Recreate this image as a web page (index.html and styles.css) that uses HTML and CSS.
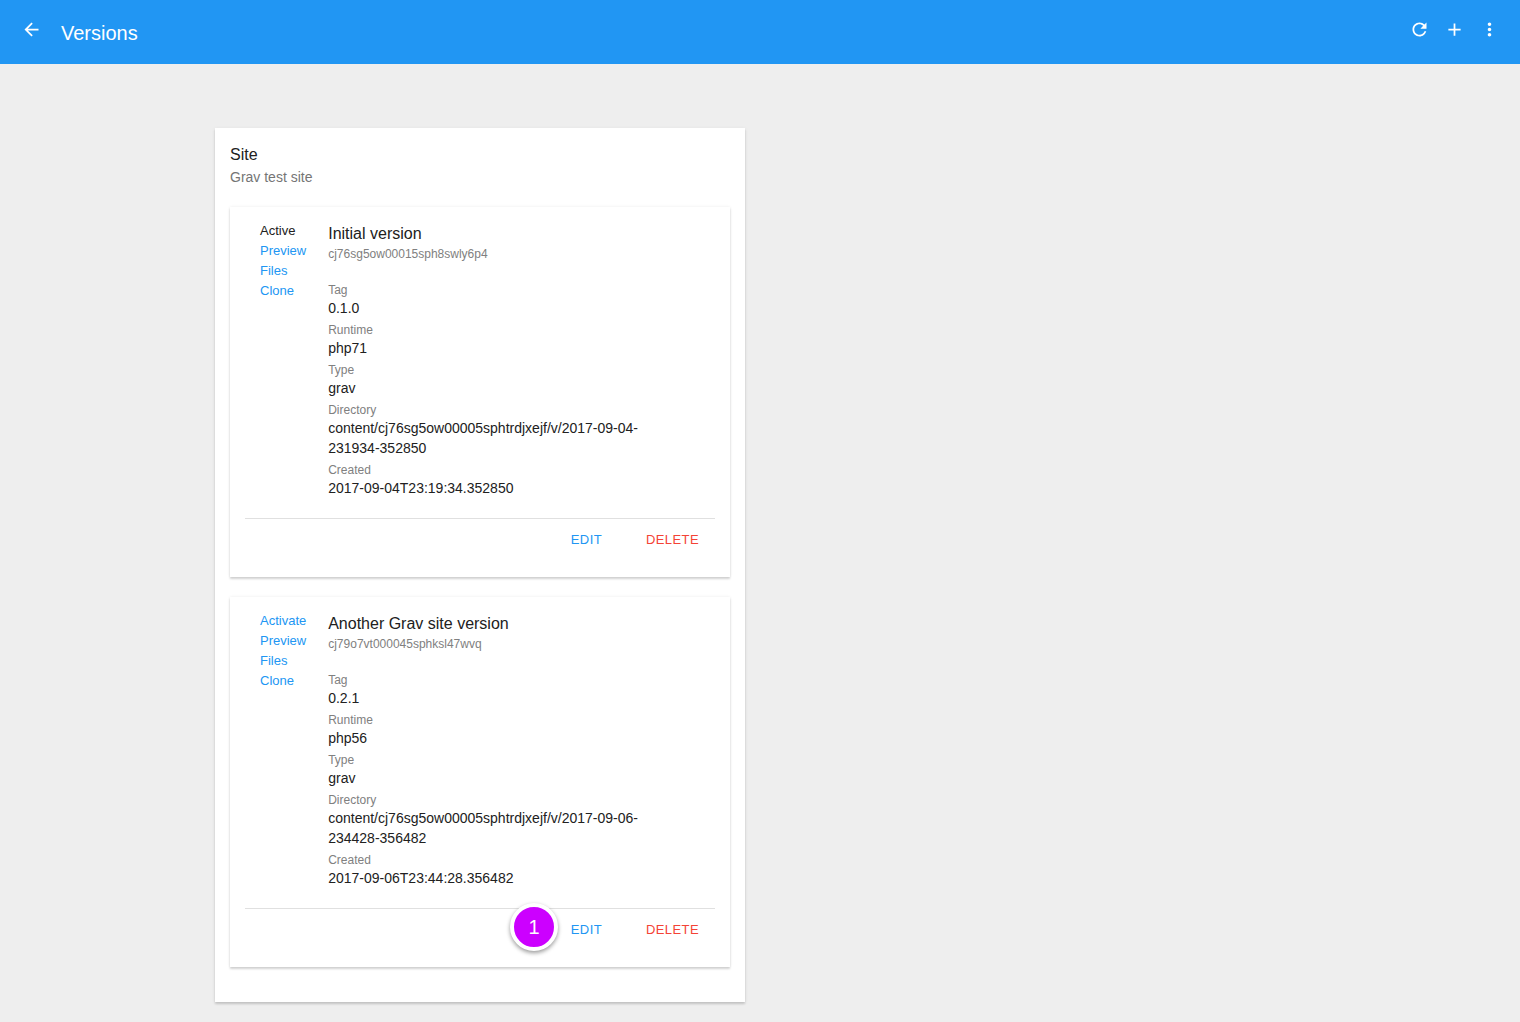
FILE: index.html
```html
<!DOCTYPE html>
<html lang="en">
<head>
    <meta charset="UTF-8">
    <title>Versions</title>
    <link rel="stylesheet" href="styles.css">
</head>
<body>
    <header class="toolbar">
        <svg class="icon back-icon" viewBox="0 0 24 24"><path d="M20 11H7.83l5.59-5.59L12 4l-8 8 8 8 1.41-1.41L7.83 13H20v-2z"/></svg>
        <div class="toolbar-title">Versions</div>
        <div class="toolbar-actions">
            <svg class="icon" viewBox="0 0 24 24"><path d="M17.65 6.35C16.2 4.9 14.21 4 12 4c-4.42 0-7.99 3.58-7.99 8s3.57 8 7.99 8c3.73 0 6.84-2.55 7.73-6h-2.08c-.82 2.33-3.04 4-5.65 4-3.31 0-6-2.69-6-6s2.69-6 6-6c1.66 0 3.14.69 4.22 1.78L13 11h7V4l-2.35 2.35z"/></svg>
            <svg class="icon" viewBox="0 0 24 24"><path d="M19 13h-6v6h-2v-6H5v-2h6V5h2v6h6v2z"/></svg>
            <svg class="icon" viewBox="0 0 24 24"><path d="M12 8c1.1 0 2-.9 2-2s-.9-2-2-2-2 .9-2 2 .9 2 2 2zm0 2c-1.1 0-2 .9-2 2s.9 2 2 2 2-.9 2-2-.9-2-2-2zm0 6c-1.1 0-2 .9-2 2s.9 2 2 2 2-.9 2-2-.9-2-2-2z"/></svg>
        </div>
    </header>

    <main class="content">
        <section class="site-card">
            <h2 class="site-name">Site</h2>
            <p class="site-desc">Grav test site</p>

            <article class="version-card">
                <div class="version-body">
                    <nav class="version-links">
                        <span class="active">Active</span>
                        <a href="#">Preview</a>
                        <a href="#">Files</a>
                        <a href="#">Clone</a>
                    </nav>
                    <div class="version-info">
                        <h3 class="version-name">Initial version</h3>
                        <p class="version-id">cj76sg5ow00015sph8swly6p4</p>
                        <dl class="fields">
                            <dt>Tag</dt>
                            <dd>0.1.0</dd>
                            <dt>Runtime</dt>
                            <dd>php71</dd>
                            <dt>Type</dt>
                            <dd>grav</dd>
                            <dt>Directory</dt>
                            <dd>content/cj76sg5ow00005sphtrdjxejf/v/2017-09-04-231934-352850</dd>
                            <dt>Created</dt>
                            <dd>2017-09-04T23:19:34.352850</dd>
                        </dl>
                    </div>
                </div>
                <div class="version-actions">
                    <button class="btn btn-edit">Edit</button>
                    <button class="btn btn-delete">Delete</button>
                </div>
            </article>

            <article class="version-card">
                <div class="version-body">
                    <nav class="version-links">
                        <a href="#">Activate</a>
                        <a href="#">Preview</a>
                        <a href="#">Files</a>
                        <a href="#">Clone</a>
                    </nav>
                    <div class="version-info">
                        <h3 class="version-name">Another Grav site version</h3>
                        <p class="version-id">cj79o7vt000045sphksl47wvq</p>
                        <dl class="fields">
                            <dt>Tag</dt>
                            <dd>0.2.1</dd>
                            <dt>Runtime</dt>
                            <dd>php56</dd>
                            <dt>Type</dt>
                            <dd>grav</dd>
                            <dt>Directory</dt>
                            <dd>content/cj76sg5ow00005sphtrdjxejf/v/2017-09-06-234428-356482</dd>
                            <dt>Created</dt>
                            <dd>2017-09-06T23:44:28.356482</dd>
                        </dl>
                    </div>
                </div>
                <div class="version-actions">
                    <div class="step-badge">1</div>
                    <button class="btn btn-edit">Edit</button>
                    <button class="btn btn-delete">Delete</button>
                </div>
            </article>
        </section>
    </main>
</body>
</html>
```

FILE: styles.css
```css
* {
    box-sizing: border-box;
}
body {
    margin: 0;
    min-height: 1022px;
    background-color: #eeeeee;
    font-family: "Liberation Sans", Arial, sans-serif;
    font-size: 14px;
    color: #212121;
}
.toolbar {
    display: flex;
    align-items: center;
    height: 64px;
    padding: 0 20px;
    background-color: #2196f3;
    color: white;
}
.icon {
    display: block;
    width: 21px;
    height: 21px;
    fill: white;
}
.back-icon {
    margin-left: 1px;
    margin-top: -5px;
}
.toolbar-title {
    margin-left: 19px;
    font-size: 20px;
    line-height: 28px;
    padding-top: 2px;
}
.toolbar-actions {
    display: flex;
    gap: 14px;
    margin-left: auto;
    margin-right: 0.5px;
    margin-top: -5px;
}
.content {
    padding: 64px 0 0 215px;
}
.site-card {
    width: 530px;
    padding: 16px 15px 35px;
    background-color: white;
    box-shadow: 0 2px 2px rgba(0, 0, 0, 0.14), 0 1px 4px rgba(0, 0, 0, 0.08);
}
.site-name {
    margin: 0;
    font-size: 16px;
    font-weight: 400;
    line-height: 22px;
}
.site-desc {
    margin: 1px 0 20px;
    line-height: 20px;
    color: #757575;
}
.version-card {
    height: 370px;
    margin-bottom: 20px;
    padding: 15px 15px 0;
    background-color: white;
    box-shadow: 0 2px 2px rgba(0, 0, 0, 0.16), 0 0 3px rgba(0, 0, 0, 0.08);
}
.version-card:last-child {
    margin-bottom: 0;
}
.version-body {
    display: flex;
    height: 296px;
}
.version-links {
    display: flex;
    flex-direction: column;
    width: 83.2px;
    margin-top: -1px;
    padding-left: 15px;
    font-size: 13px;
    line-height: 20px;
}
.version-links a {
    color: #2196f3;
    text-decoration: none;
}
.version-info {
    width: 340px;
}
.version-name {
    margin: 1px 0 0;
    font-size: 16px;
    font-weight: 400;
    line-height: 22px;
}
.version-id {
    margin: -1px 0 16px;
    font-size: 12px;
    line-height: 20px;
    color: #808080;
}
.fields {
    margin: 0;
}
.fields dt {
    font-size: 12px;
    line-height: 20px;
    color: #808080;
}
.fields dd {
    margin: -2px 0 2px;
    line-height: 20px;
}
.version-actions {
    position: relative;
    display: flex;
    justify-content: flex-end;
    align-items: center;
    height: 42px;
    padding: 0 0 1px;
    border-top: 1px solid #e0e0e0;
}
.btn {
    border: none;
    background: none;
    padding: 0;
    font-family: inherit;
    font-size: 13px;
    letter-spacing: 0.4px;
    text-transform: uppercase;
}
.btn-edit {
    margin-right: 44px;
    color: #2196f3;
}
.btn-delete {
    margin-right: 16px;
    color: #f44336;
}
.step-badge {
    position: absolute;
    left: 265px;
    top: -6px;
    width: 48px;
    height: 48px;
    border: 4px solid white;
    border-radius: 50%;
    background-color: #cc00ff;
    color: white;
    font-size: 20px;
    line-height: 40px;
    text-align: center;
    box-shadow: 0 2px 4px rgba(0, 0, 0, 0.4);
}
```
